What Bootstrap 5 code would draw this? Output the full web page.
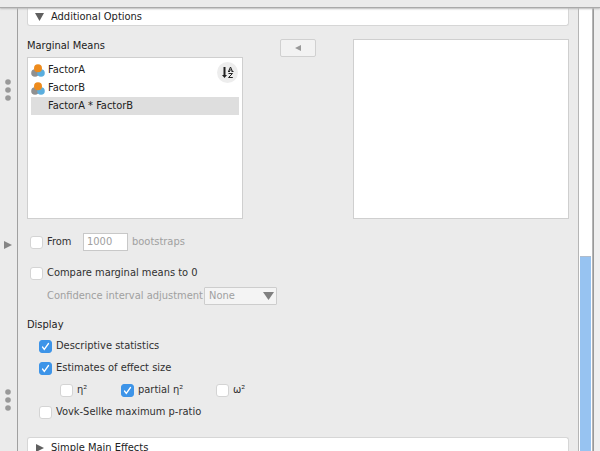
<!DOCTYPE html>
<html lang="en">
<head>
<meta charset="utf-8">
<meta name="viewport" content="width=device-width, initial-scale=1">
<title>Marginal Means</title>
<link href="https://cdn.jsdelivr.net/npm/bootstrap@5.3.0/dist/css/bootstrap.min.css" rel="stylesheet">
<style>
body{background:#ebebeb;color:#303030;font:11px/18px "DejaVu Sans Condensed","DejaVu Sans",sans-serif}
.top-strip{height:8px;border-bottom:1px solid #aaa;box-shadow:0 1px 2px #bbb;z-index:1}
.gutter{width:18px;border-right:1px solid #a0a0a0;padding:31px 2px 0 0;gap:139px}
.options{padding:0 9px}
.section-btn{background:#fff;border:1px solid #d6d6d6;border-radius:3px;padding:0 7px;gap:6px;color:#222}
.section-first{height:18px;border-top:0;border-radius:0 0 3px 3px}
.section-last{margin-top:14px;height:20px;border-bottom:0;border-radius:3px 3px 0 0}
.assign{margin-top:13px}
.heading{color:#222}
.source .heading{line-height:14px;padding-bottom:4px}
.var-box{background:#fff;border:1px solid #cfcfcf;padding:3px 3px}
.source .var-box{height:162px}
.target .var-box{height:180px}
.var-row{height:18px;gap:3px;color:#222}
.var-row.selected{background:#dedede;padding-left:17px}
.sort-btn{top:4px;right:4px;width:21px;height:21px;background:#ededed}
.middle{width:110px}
.move-btn{width:36px;height:18px;background:#f2f2f2;border:1px solid #d0d0d0;border-radius:2px}
.tick{appearance:none;width:13px;height:13px;background:#fff;border:1px solid #d4d4d4;border-radius:3px;margin:0;flex:none}
.tick:checked{border-color:#3d94e8;background:#3d94e8 url("data:image/svg+xml,%3Csvg xmlns='http://www.w3.org/2000/svg' viewBox='0 0 11 11'%3E%3Cpath d='M2.5 6 4.3 8.3 8.5 2.5' fill='none' stroke='%23fff' stroke-width='1.3' stroke-linecap='round'/%3E%3C/svg%3E") center/11px no-repeat}
.opt{gap:4px;height:18px}
.muted{color:#a0a0a0}
.indent-1{padding-left:3px}
.indent-2{padding-left:12px}
.indent-3{padding-left:21px}
.boot-input{width:45px;height:18px;border:1px solid #c8c8c8;padding:0 3px;background:#fff;color:#a0a0a0;margin-right:4px}
.boot-label{width:32px}
.ci-label{width:157px}
.ci-select{appearance:none;width:73px;height:18px;line-height:16px;border:1px solid #cdcdcd;border-radius:1px;padding:0 4px;color:#a0a0a0;opacity:1;background:#f4f4f4 url("data:image/svg+xml,%3Csvg xmlns='http://www.w3.org/2000/svg' viewBox='0 0 11 8'%3E%3Cpath d='M0 0H11L5.5 8Z' fill='%23808080'/%3E%3C/svg%3E") right 2px center/11px 8px no-repeat}
.row-boot{margin-top:14px}
.row-compare{margin-top:13px}
.row-ci{padding-left:20px;margin-top:5px}
.display-head{margin-top:11px}
.checks{margin-top:1px}
.checks .opt{height:22px}
.eta{width:61px}
.partial{width:95px}
.scroll-track{width:15px;background:#fff;border:solid #b5b5b5;border-width:0 1px;padding:0 1px}
.scroll-thumb{height:44%;background:#97c3f1;border-top:1px solid #b0bccb}
.edge{width:7px;background:#efefef;border-left:1px solid #999}
</style>
</head>
<body class="vh-100 overflow-hidden d-flex flex-column">
<header class="top-strip flex-shrink-0"></header>
<div class="d-flex flex-grow-1 overflow-hidden">
  <aside class="gutter flex-shrink-0 d-flex flex-column align-items-center justify-content-center">
    <svg class="flex-shrink-0" width="6" height="24" fill="#999"><circle cx="3" cy="4" r="2.8"/><circle cx="3" cy="12" r="2.8"/><circle cx="3" cy="20" r="2.8"/></svg>
    <svg class="flex-shrink-0" width="8" height="8" fill="#858585"><path d="M0 0 8 4 0 8Z"/></svg>
    <svg class="flex-shrink-0" width="6" height="24" fill="#999"><circle cx="3" cy="4" r="2.8"/><circle cx="3" cy="12" r="2.8"/><circle cx="3" cy="20" r="2.8"/></svg>
  </aside>
  <main class="options flex-grow-1">
    <button type="button" class="section-btn section-first w-100 d-flex align-items-center">
      <svg width="10" height="8" fill="#606060"><path d="M0 0H9L4.500 8Z"/></svg>Additional Options
    </button>
    <section class="assign d-flex">
      <div class="source flex-fill w-50">
        <div class="heading">Marginal Means</div>
        <div class="var-box position-relative">
          <div class="var-row d-flex align-items-center"><svg width="14" height="13"><circle cx="4" cy="9" r="3.800" fill="#909090"/><circle cx="10" cy="9" r="3.800" fill="#5aaede"/><circle cx="7" cy="4.300" r="4" fill="#ee8b1c"/></svg>FactorA</div>
          <div class="var-row d-flex align-items-center"><svg width="14" height="13"><circle cx="4" cy="9" r="3.800" fill="#909090"/><circle cx="10" cy="9" r="3.800" fill="#5aaede"/><circle cx="7" cy="4.300" r="4" fill="#ee8b1c"/></svg>FactorB</div>
          <div class="var-row selected d-flex align-items-center">FactorA * FactorB</div>
          <button type="button" class="sort-btn btn rounded-circle border-0 p-0 position-absolute d-flex align-items-center justify-content-center" aria-label="Sort by name">
            <svg width="12" height="13" fill="none" stroke="#222"><path d="M2.500 1V10" stroke-width="2"/><path d="M0 9H5L2.500 12Z" fill="#222" stroke="none"/><path d="M6.500 5.500 8.500 1 10.500 5.500M7.200 4H10M6 5.500H8M9.500 5.500H11.500M6.500 7.500H10.500L6.500 11.500H10.800"/></svg>
          </button>
        </div>
      </div>
      <div class="middle flex-shrink-0 text-center">
        <button type="button" class="move-btn p-0 d-inline-flex align-items-center justify-content-center align-top" aria-label="Move left"><svg width="6" height="6" fill="#999"><path d="M6 0V6L0 3Z"/></svg></button>
      </div>
      <div class="target flex-fill w-50"><div class="var-box"></div></div>
    </section>

    <div class="row-boot opt indent-1 d-flex align-items-center">
      <input class="tick" type="checkbox" id="boot"><label class="boot-label" for="boot">From</label>
      <div class="d-flex align-items-center muted"><input class="boot-input" type="text" id="count" value="1000" disabled><label for="count">bootstraps</label></div>
    </div>
    <div class="row-compare opt indent-1 d-flex align-items-center"><input class="tick" type="checkbox" id="cmp"><label for="cmp">Compare marginal means to 0</label></div>
    <div class="row-ci d-flex align-items-center muted"><label class="ci-label text-nowrap" for="ci">Confidence interval adjustment</label><select class="ci-select" id="ci" disabled><option>None</option></select></div>

    <div class="display-head heading">Display</div>
    <div class="checks indent-2 d-flex flex-column">
      <div class="opt d-flex align-items-center"><input class="tick" type="checkbox" id="desc" checked><label for="desc">Descriptive statistics</label></div>
      <div class="opt d-flex align-items-center"><input class="tick" type="checkbox" id="est" checked><label for="est">Estimates of effect size</label></div>
      <div class="indent-3 d-flex">
        <div class="opt eta d-flex align-items-center"><input class="tick" type="checkbox" id="eta"><label for="eta">η²</label></div>
        <div class="opt partial d-flex align-items-center"><input class="tick" type="checkbox" id="peta" checked><label for="peta">partial η²</label></div>
        <div class="opt d-flex align-items-center"><input class="tick" type="checkbox" id="omega"><label for="omega">ω²</label></div>
      </div>
      <div class="opt d-flex align-items-center"><input class="tick" type="checkbox" id="vovk"><label for="vovk">Vovk-Sellke maximum p-ratio</label></div>
    </div>
    <button type="button" class="section-btn section-last w-100 d-flex align-items-center">
      <svg width="10" height="8" fill="#606060"><path d="M1 0 9 4 1 8Z"/></svg>Simple Main Effects
    </button>
  </main>
  <div class="scroll-track flex-shrink-0 d-flex flex-column justify-content-end"><div class="scroll-thumb"></div></div>
  <div class="edge flex-shrink-0"></div>
</div>
<script src="https://cdn.jsdelivr.net/npm/bootstrap@5.3.0/dist/js/bootstrap.bundle.min.js"></script>
</body>
</html>
